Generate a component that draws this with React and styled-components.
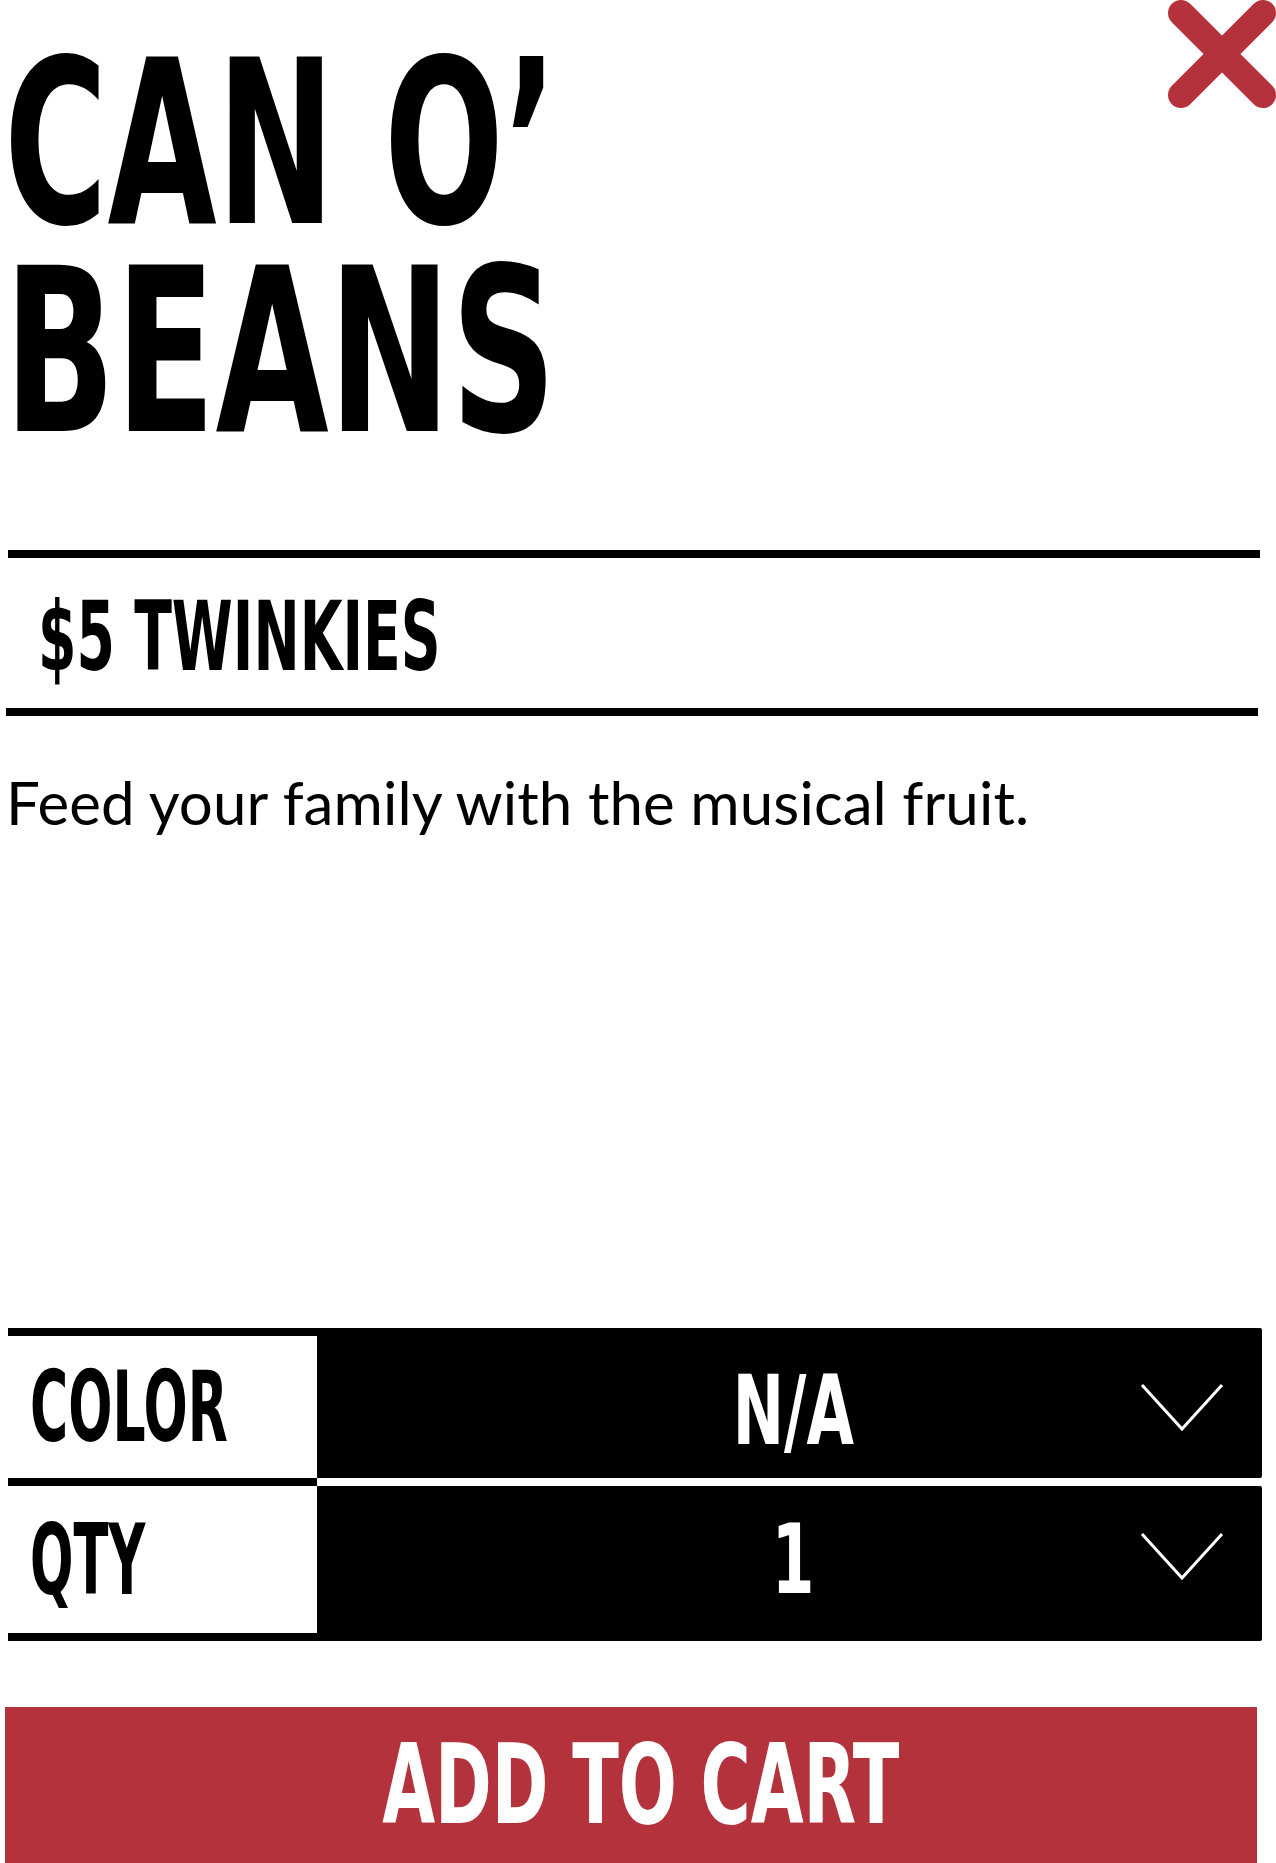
import React from "react";
import styled, { createGlobalStyle } from "styled-components";

const RED = "#b3323b";
const DISPLAY = `"DejaVu Sans Condensed", "DejaVu Sans", "Liberation Sans", sans-serif`;

const Global = createGlobalStyle`
  html, body { margin: 0; padding: 0; background: #fff; }
  body { font-family: Lato, "Open Sans", sans-serif; color: #000; }
  *, *::before, *::after { box-sizing: border-box; }
`;

const Page = styled.main`
  position: relative;
  min-height: 100vh;
  display: flex;
  flex-direction: column;
  padding: 40px 16px 0 6px;
  overflow: hidden;
`;

const Squish = styled.span`
  display: ${(p) => (p.$block ? "block" : "inline-block")};
  white-space: nowrap;
  transform: scaleX(${(p) => p.$sx});
  transform-origin: ${(p) => p.$origin || "left center"};
`;

const CloseButton = styled.button`
  position: absolute;
  top: 0;
  right: 0;
  width: 108px;
  height: 108px;
  padding: 0;
  border: 0;
  background: none;
  cursor: pointer;
  svg { display: block; }
`;

const Title = styled.h1`
  margin: 0 0 0 -2px;
  font-family: ${DISPLAY};
  font-weight: 700;
  font-size: 229px;
  line-height: 208px;
`;

const Rule = styled.hr`
  margin: ${(p) => p.$top}px 0 0 ${(p) => p.$left}px;
  width: 1252px;
  height: 8px;
  border: 0;
  background: #000;
  flex: none;
`;

const Price = styled.h2`
  margin: 31px 0 23px;
  padding-left: 32px;
  font-family: ${DISPLAY};
  font-weight: 700;
  font-size: 96px;
  line-height: 96px;
`;

const Description = styled.p`
  margin: 50px 0 0 0;
  font-family: Lato, "Open Sans", sans-serif;
  font-weight: 400;
  font-size: 60px;
  line-height: 72px;
  letter-spacing: 0.1px;
`;

const Options = styled.div`
  margin: auto 0 0 2px;
  display: grid;
  grid-template-columns: 309px 945px;
`;

const OptionLabel = styled.div`
  height: ${(p) => p.$h}px;
  display: flex;
  align-items: center;
  padding-left: 22px;
  border-top: ${(p) => (p.$first ? "8px solid #000" : "0")};
  border-bottom: 8px solid #000;
  background: #fff;
  font-family: ${DISPLAY};
  font-weight: 700;
  font-size: 98px;
  line-height: 1;
`;

const OptionSelect = styled.div`
  align-self: start;
  height: ${(p) => p.$h}px;
  padding: ${(p) => p.$pt || 0}px 0 ${(p) => p.$pb || 0}px;
  display: grid;
  grid-template-columns: 1fr auto 1fr;
  align-items: center;
  background: #000;
  color: #fff;
  border-radius: 0 2px 2px 0;
  font-family: ${DISPLAY};
  font-weight: 700;
  font-size: 96px;
  line-height: 1;
  cursor: pointer;
`;

const SelectValue = styled.div`
  grid-column: 2;
  padding-left: 7px;
`;

const Chevron = styled.svg`
  grid-column: 3;
  justify-self: end;
  margin: 0 38px 8px 0;
  display: block;
`;

const CartButton = styled.button`
  margin: 66px 0 0 -1px;
  width: 1252px;
  height: 156px;
  flex: none;
  padding: 0 0 0 20px;
  border: 0;
  background: ${RED};
  color: #fff;
  display: flex;
  align-items: center;
  justify-content: center;
  font-family: ${DISPLAY};
  font-weight: 700;
  font-size: 110px;
  line-height: 1;
  cursor: pointer;
`;

const ChevronIcon = () => (
  <Chevron width="84" height="48" viewBox="0 0 84 48" aria-hidden="true">
    <polyline points="2,2 42,46 82,2" fill="none" stroke="#fff" strokeWidth="3" />
  </Chevron>
);

export default function App() {
  return (
    <>
      <Global />
      <Page>
        <CloseButton aria-label="Close">
          <svg width="108" height="108" viewBox="0 0 108 108">
            <path d="M13 13 L95 95 M95 13 L13 95" stroke={RED} strokeWidth="26" strokeLinecap="round" fill="none" />
          </svg>
        </CloseButton>

        <Title>
          <Squish $block $sx={0.685}>CAN O’</Squish>
          <Squish $block $sx={0.71}>BEANS</Squish>
        </Title>

        <Rule $top={94} $left={2} />
        <Price>
          <Squish $sx={0.64}>$5 TWINKIES</Squish>
        </Price>
        <Rule $top={0} $left={0} />

        <Description>Feed your family with the musical fruit.</Description>

        <Options>
          <OptionLabel $first $h={158}>
            <Squish $sx={0.59}>COLOR</Squish>
          </OptionLabel>
          <OptionSelect $h={150} $pt={16}>
            <SelectValue>
              <Squish $sx={0.71} $origin="center">N/A</Squish>
            </SelectValue>
            <ChevronIcon />
          </OptionSelect>

          <OptionLabel $h={155}>
            <Squish $sx={0.58}>QTY</Squish>
          </OptionLabel>
          <OptionSelect $h={155} $pb={7}>
            <SelectValue>
              <Squish $sx={0.71} $origin="center">1</Squish>
            </SelectValue>
            <ChevronIcon />
          </OptionSelect>
        </Options>

        <CartButton>
          <Squish $sx={0.69} $origin="center">ADD TO CART</Squish>
        </CartButton>
      </Page>
    </>
  );
}
